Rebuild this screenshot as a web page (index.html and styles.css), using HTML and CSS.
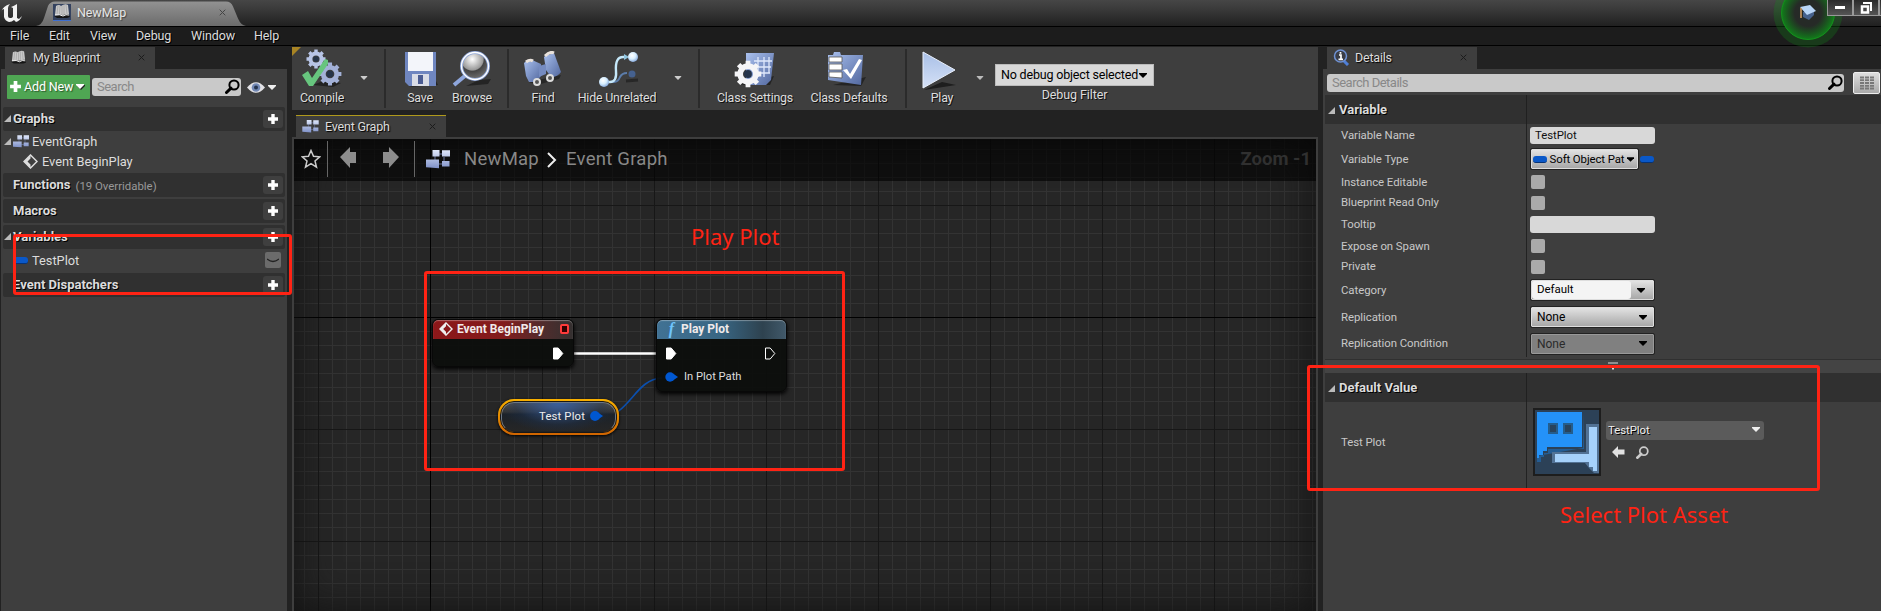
FILE: index.html
```html
<!DOCTYPE html>
<html lang="en">
<head>
<meta charset="utf-8">
<title>NewMap</title>
<link rel="stylesheet" href="styles.css">
</head>
<body>
<svg class="defs" width="0" height="0" aria-hidden="true">
  <defs>
    <linearGradient id="steel" x1="0" y1="0" x2="0" y2="1"><stop offset="0" stop-color="#dfe7fa"/><stop offset="1" stop-color="#7f91c8"/></linearGradient>
    <linearGradient id="blue" x1="0" y1="0" x2="1" y2="1"><stop offset="0" stop-color="#a9c0ee"/><stop offset="1" stop-color="#52689f"/></linearGradient>
    <radialGradient id="lens" cx=".4" cy=".25" r=".8"><stop offset="0" stop-color="#fff"/><stop offset=".5" stop-color="#999"/><stop offset=".55" stop-color="#444"/><stop offset="1" stop-color="#777"/></radialGradient>
    <radialGradient id="ball" cx=".4" cy=".35" r=".7"><stop offset="0" stop-color="#fff"/><stop offset=".5" stop-color="#d8efff"/><stop offset="1" stop-color="#7ea2d8"/></radialGradient>
    <linearGradient id="play" x1="0" y1="0" x2="0" y2="1"><stop offset="0" stop-color="#a8bfe6"/><stop offset="1" stop-color="#d5e1f7"/></linearGradient>
    <symbol id="caret" viewBox="0 0 8 5"><path d="M0 0h8v1L4 5 0 1z"/></symbol>
    <symbol id="plus" viewBox="0 0 12 12"><path d="M4.3 1h3.4v3.3H11v3.4H7.7V11H4.3V7.7H1V4.3h3.3z" fill="#fff"/></symbol>
    <symbol id="glass" viewBox="0 0 15 15"><circle cx="9" cy="6" r="4.6" fill="none" stroke="currentColor" stroke-width="2"/><path d="M6 9.2 1.5 13.5" stroke="currentColor" stroke-width="3" stroke-linecap="round"/></symbol>
    <symbol id="graph" viewBox="0 0 24 19"><path d="M12 4h6M9 10V4M18 7v5M12 14h6" stroke="#66739c" fill="none"/><path d="M6.500 0h7v6.500h-7zM16 .3h8v6.200h-8zM0 9.500h13v8.700L0 17.200zM16 11h7.500v5.600H16z" fill="url(#steel)"/></symbol>
    <symbol id="book" viewBox="0 0 16 15"><path d="M0 12l3 2h10l3-1-2-4z" fill="#151515"/><path d="M2 2q3-2 5 0 4-3 7-1l1 9q-3 0-6 1-4-1-8 0z" fill="#c9c9c9"/><path d="M4 1.500 3 10M6 2 5.500 10M8 2v8.500M10 1v9M12 1l1 9" stroke="#999" stroke-width=".6"/><path d="M1 11q5-1 8 1 3-2 6-1" fill="none" stroke="#fff"/></symbol>
    <symbol id="event" viewBox="0 0 15 15"><path d="M7.500 1 14 7.500 7.500 14 1 7.500z" fill="none" stroke="currentColor" stroke-width="1.500"/><path d="M7.500 1 1 7.500 7.500 14v-3.500L4.500 7.500l3-3z" fill="currentColor"/></symbol>
    <symbol id="cog" viewBox="-10 -10 20 20"><circle r="5.600" fill="none" stroke="currentColor" stroke-width="4"/><g stroke="currentColor" stroke-width="3.400"><path d="M0-9.500V-6M0 9.500V6M-9.500 0H-6M9.500 0H6M-6.700-6.700l2.400 2.400M6.700 6.700 4.300 4.300M-6.700 6.700l2.400-2.400M6.700-6.700 4.300-4.300"/></g><circle r="2.800" fill="#26344a"/></symbol>
    <symbol id="cross" viewBox="0 0 7 7"><path d="M.7.700l5.600 5.600M6.300.7.700 6.300" stroke="currentColor"/></symbol>
    <symbol id="exec" viewBox="0 0 12 13"><path d="M1.500 1h4.700l4.600 5.500L6.200 12H1.500z" stroke="#fff" stroke-linejoin="round"/></symbol>
    <symbol id="back" viewBox="0 0 17 24"><path d="M0 10 10 0v5h6v11h-6v5z"/></symbol>
    <symbol id="expanded" viewBox="0 0 7 7"><path d="M7 0v7H0z" fill="#bbb"/></symbol>
  </defs>
</svg>

<header class="titlebar">
  <svg class="ue" width="24" height="20" viewBox="0 0 24 20"><path d="M1 9Q3 3 10 1 8 3 8 5v8q0 2 2 2 3 0 3-2V5l-2-1q3-1 6-3v14l2 1 3-3q-2 5-6 6l-2-2q-2 2-5 2-4-1-5-5V6Q2 6 1 9z" fill="#f2f2f2"/></svg>
  <div class="maptab">
    <svg class="maptab-shape" width="210" height="25" viewBox="0 0 210 25"><defs><linearGradient id="tg" x1="0" y1="0" x2="0" y2="1"><stop offset="0" stop-color="#929292"/><stop offset="1" stop-color="#6b6b6b"/></linearGradient></defs><path d="M0 25q6-1 8-8l4-12Q14 .500 19 .500H190q5 0 7 5l5 12q3 7 8 7.500z" fill="url(#tg)"/></svg>
    <span class="mapicon"><svg width="16" height="15"><use href="#book"/></svg></span>
    <span class="maptitle">NewMap</span>
    <svg class="x" width="7" height="7"><use href="#cross"/></svg>
  </div>
  <div class="tutorial">
    <svg width="72" height="48" viewBox="0 0 72 48"><defs><radialGradient id="gl"><stop offset=".5" stop-color="#0a8a12" stop-opacity="0"/><stop offset="1" stop-color="#0a9a16" stop-opacity=".75"/></radialGradient></defs><circle cx="36" cy="13" r="34.500" fill="#128a18" fill-opacity=".28"/><circle cx="36" cy="13" r="26.500" fill="#262a27"/><circle cx="36" cy="13" r="26.500" fill="url(#gl)" stroke="#14921c"/><path d="M31 12v5l6 3 5-5v-4z" fill="#46618c"/><path d="M28 7 38 5l6 6-9 4z" fill="#b8d5f7"/><path d="M29 8v10" stroke="#d9a066" stroke-width="1.500"/></svg>
  </div>
  <div class="winbtns">
    <span><svg width="12" height="6"><path d="M1 1h10v3H1z" fill="#fff"/></svg></span>
    <span><svg width="12" height="12" viewBox="0 0 12 12"><path d="M3 0h9v9h-2V2H3z" fill="#fff"/><path d="M2 4.500h6v6H2z" fill="none" stroke="#fff" stroke-width="2.500"/></svg></span>
    <span></span>
  </div>
</header>
<nav class="menu"><span class="m1">File</span><span class="m2">Edit</span><span class="m3">View</span><span class="m4">Debug</span><span class="m5">Window</span><span class="m6">Help</span></nav>

<div class="dock">
  <aside class="left">
    <div class="tab"><svg width="15" height="15"><use href="#book"/></svg><span class="tabname">My Blueprint</span><svg class="x" width="7" height="7"><use href="#cross"/></svg></div>
    <div class="leftbody">
      <div class="tools">
        <button class="addnew"><svg width="13" height="13"><use href="#plus"/></svg><span>Add New</span><svg width="8" height="5" fill="#fff"><use href="#caret"/></svg></button>
        <div class="search"><span>Search</span><svg width="15" height="15"><use href="#glass"/></svg></div>
        <svg class="eye" width="18" height="11" viewBox="0 0 18 11"><path d="M0 5.500Q9-5 18 5.500 9 16 0 5.500z" fill="#e2e2e6"/><circle cx="9" cy="5.500" r="4.300" fill="#7288b4"/><circle cx="9" cy="5.500" r="2" fill="#25344e"/></svg>
        <svg width="8" height="5" fill="#eee"><use href="#caret"/></svg>
      </div>
      <div class="sec"><svg class="tri" width="7" height="7"><use href="#expanded"/></svg><b>Graphs</b><i><svg width="12" height="12"><use href="#plus"/></svg></i></div>
      <div class="item"><svg class="tri" width="7" height="7"><use href="#expanded"/></svg><svg width="16" height="13"><use href="#graph"/></svg><span>EventGraph</span></div>
      <div class="item deep"><svg width="15" height="15" color="#ddd"><use href="#event"/></svg><span>Event BeginPlay</span></div>
      <div class="sec"><b>Functions</b><small>(19 Overridable)</small><i><svg width="12" height="12"><use href="#plus"/></svg></i></div>
      <div class="sec gap"><b>Macros</b><i><svg width="12" height="12"><use href="#plus"/></svg></i></div>
      <div class="sec gap"><svg class="tri" width="7" height="7"><use href="#expanded"/></svg><b>Variables</b><i><svg width="12" height="12"><use href="#plus"/></svg></i></div>
      <div class="item var"><span class="pill"></span><span>TestPlot</span><i class="closed"><svg width="12" height="5" viewBox="0 0 12 5"><path d="M0 1q6 5 12 0" fill="none" stroke="#222" stroke-width="1.300"/></svg></i></div>
      <div class="sec"><b>Event Dispatchers</b><i><svg width="12" height="12"><use href="#plus"/></svg></i></div>
    </div>
  </aside>

  <main class="center">
    <div class="toolbar">
      <span class="corner"></span>
      <div class="tool compile"><svg width="42" height="40" viewBox="0 0 42 40"><path d="M12 36l10-4 18 2-8 4z" fill="#222"/><svg x="5" y="0" width="20" height="20" color="#b7c4e6"><use href="#cog"/></svg><svg x="17" y="13" width="24" height="24" color="#a3b1d8"><use href="#cog"/></svg><path d="M1 26l6-4 4 7L24 10l3 1v4L12 37H8z" fill="#67c57e"/></svg><span>Compile</span></div>
      <svg class="drop d1" width="8" height="4" fill="#ccc"><use href="#caret"/></svg>
      <div class="tool save"><svg width="36" height="38" viewBox="0 0 36 38"><path d="M5 36l29-2-3-6z" fill="#242424"/><path d="M1 1h31v34H5l-4-4z" fill="#6f86c0"/><path d="M4 1h25v19H4z" fill="#f3f5fa"/><path d="M8 23h17v12H8z" fill="#d9dce6"/><path d="M14 24h5v9h-5z" fill="#4b5c92"/></svg><span>Save</span></div>
      <div class="tool browse"><svg width="40" height="38" viewBox="0 0 40 38"><path d="M14 35l22-2 3-5-12 1z" fill="#242424"/><path d="M14 24 2 34" stroke="#8ea6dc" stroke-width="4"/><circle cx="23" cy="15" r="13.500" fill="url(#lens)" stroke="#90a8dc" stroke-width="3"/><circle cx="23" cy="15" r="13.500" fill="none" stroke="#fff" stroke-width="1.300"/></svg><span>Browse</span></div>
      <div class="tool find"><svg width="40" height="38" viewBox="0 0 40 38"><path d="M6 31l8 3 22-6 2-4z" fill="#272727"/><path d="M1 12q4-5 8-3l9 4v12l-5 6H6L3 25z" fill="url(#blue)"/><path d="M21 6q6-6 10-4l7 19q-3 5-10 5l-5-7z" fill="url(#blue)"/><path d="M3 11q4-3 7-1M22 5q5-5 9-3" stroke="#e9e2dc" stroke-width="3"/><path d="M16 15l7-2v10l-7 3z" fill="#758bc0"/><circle cx="14" cy="31" r="3" fill="#555" stroke="#ddd" stroke-width="2"/><circle cx="27" cy="27" r="3" fill="#555" stroke="#ddd" stroke-width="2"/></svg><span>Find</span></div>
      <div class="tool hide"><svg width="42" height="38" viewBox="0 0 42 38"><path d="M8 31h8q4 0 6-5 2-4 7-4" fill="none" stroke="#5c7daa" stroke-width="2"/><circle cx="34" cy="23" r="3.500" fill="#45618f"/><path d="M28 30l12-1" stroke="#272727" stroke-width="3"/><path d="M6 31h6q7 0 6-11-1-14 7-14h3" fill="none" stroke="#c5e8fa" stroke-width="2.400"/><path d="M26 3l5 3-5 3z" fill="#8fc4df"/><circle cx="6" cy="31" r="5" fill="url(#ball)"/><circle cx="35" cy="6" r="5" fill="url(#ball)"/></svg><span>Hide Unrelated</span></div>
      <svg class="drop d2" width="8" height="4" fill="#ccc"><use href="#caret"/></svg>
      <div class="tool settings"><svg width="42" height="38" viewBox="0 0 42 38"><path d="M6 34h30l4-9z" fill="#242424"/><path d="M12 2h28l-3 27-5 5H12z" fill="url(#blue)"/><path d="M24 6v20M30 6v20M35 6v16M20 10h18M20 16h17M20 22h16" stroke="#dfe9fc" stroke-width="1.300"/><svg x="0" y="9" width="28" height="28" color="#f5f5f7"><use href="#cog"/></svg></svg><span>Class Settings</span></div>
      <div class="tool defaults"><svg width="42" height="38" viewBox="0 0 42 38"><path d="M8 34l28 1 5-9z" fill="#242424"/><path d="M3 4h5l1-3h6l1 3h22l-2 30-33-5z" fill="url(#blue)"/><path d="M4 6h13v5H4zM4 13h13v6H4zM4 21h13v6L4 26z" fill="#fff" stroke="#555" stroke-width=".8"/><path d="M18 19l4-1 3 5L34 8l3 1-11 19z" fill="#fff"/></svg><span>Class Defaults</span></div>
      <div class="tool playb"><svg width="36" height="40" viewBox="0 0 36 40"><path d="M2 39l32-5-14-3z" fill="#1e1e1e"/><path d="M1 1 33 19 1 37z" fill="url(#play)" stroke="#e9f0fc"/></svg><span>Play</span></div>
      <svg class="drop d3" width="8" height="4" fill="#bbb"><use href="#caret"/></svg>
      <div class="filter"><div class="filterbox"><span>No debug object selected</span><svg width="8" height="5"><use href="#caret"/></svg></div><span>Debug Filter</span></div>
      <u class="s1"></u><u class="s2"></u><u class="s3"></u><u class="s4"></u>
    </div>
    <div class="tab graphtab"><svg width="17" height="13"><use href="#graph"/></svg><span class="tabname">Event Graph</span><svg class="x" width="7" height="7"><use href="#cross"/></svg></div>
    <section class="canvas">
      <div class="crumbs">
        <svg class="star" width="20" height="20" viewBox="0 0 20 20"><path d="M10 1.500l2.500 5.800 6.200.5-4.700 4.100 1.500 6.200-5.500-3.400-5.500 3.400L6 11.900 1.300 7.800l6.200-.5z" fill="none" stroke="#ccc" stroke-width="1.500"/></svg>
        <hr>
        <svg class="bk" width="17" height="24" fill="#8c8c8c"><use href="#back"/></svg>
        <svg class="fw" width="17" height="24" fill="#8c8c8c"><use href="#back"/></svg>
        <hr>
        <svg class="gi" width="24" height="19"><use href="#graph"/></svg>
        <span class="c1">NewMap</span>
        <svg class="chev" width="10" height="16" viewBox="0 0 10 16"><path d="M1 1l7 7-7 7" fill="none" stroke="#eee" stroke-width="2"/></svg>
        <span class="c2">Event Graph</span>
        <b class="zoom">Zoom -1</b>
      </div>
      <svg class="wires" width="1022" height="472" viewBox="294 139 1022 472"><path d="M574 353.500H656" stroke="#fff" stroke-width="2.600"/><path d="M600 417c30 0 34-38 62-39" fill="none" stroke="#0b4fae" stroke-width="1.600"/></svg>
      <div class="node ev"><div class="head"><svg width="14" height="14" color="#eee"><use href="#event"/></svg><b>Event BeginPlay</b><em></em></div><svg class="pin" width="12" height="13" fill="#fff"><use href="#exec"/></svg></div>
      <div class="node pp"><div class="head"><span class="fn">f</span><b>Play Plot</b></div>
        <div class="prow"><svg width="12" height="13" fill="#fff"><use href="#exec"/></svg><svg width="12" height="13" fill="none"><use href="#exec"/></svg></div>
        <div class="prow"><svg width="13" height="10" viewBox="0 0 13 10"><circle cx="5" cy="5" r="4.700" fill="#0057d0"/><path d="M8 1.500 13 5 8 8.500z" fill="#0057d0"/></svg><span>In Plot Path</span></div></div>
      <div class="getter"><div><span>Test Plot</span><svg width="13" height="10" viewBox="0 0 13 10"><circle cx="5" cy="5" r="4.900" fill="#0057d0"/><path d="M8 1.500 13 5 8 8.500z" fill="#0057d0"/></svg></div></div>
    </section>
  </main>

  <aside class="details">
    <div class="tab"><svg width="17" height="17" viewBox="0 0 17 17"><path d="M10 11l5 5" stroke="#4f7fd8" stroke-width="3"/><circle cx="7.500" cy="7" r="6" fill="#3a3d46" stroke="#6f92d4" stroke-width="1.500"/><path d="M7.500 3v1.800M6 6h2v4M5.500 10.300h4.500" stroke="#fff" stroke-width="1.700" fill="none"/></svg><span class="tabname">Details</span><svg class="x" width="7" height="7"><use href="#cross"/></svg></div>
    <div class="dbody">
      <div class="dsearch"><div class="search"><span>Search Details</span><svg width="15" height="15"><use href="#glass"/></svg></div><span class="gridbtn"><svg width="14" height="14" viewBox="0 0 14 14"><path d="M0 1.500h14M0 4.200h14M0 7h14M0 9.800h14M0 12.500h14" stroke="#777" stroke-width="1.800" stroke-dasharray="4 1"/></svg></span></div>
      <div class="dhead"><svg width="7" height="7"><use href="#expanded"/></svg><b>Variable</b></div>
      <div class="row h23"><label>Variable Name</label><div><span class="input">TestPlot</span></div></div>
      <div class="row h25"><label>Variable Type</label><div><span class="btn type"><span class="pill"></span><span>Soft Object Pat</span><svg width="7" height="5"><use href="#caret"/></svg></span><span class="pill"></span></div></div>
      <div class="row h21"><label>Instance Editable</label><div><span class="check"></span></div></div>
      <div class="row h20"><label>Blueprint Read Only</label><div><span class="check"></span></div></div>
      <div class="row h23"><label>Tooltip</label><div><span class="input"></span></div></div>
      <div class="row h21"><label>Expose on Spawn</label><div><span class="check"></span></div></div>
      <div class="row h20"><label>Private</label><div><span class="check"></span></div></div>
      <div class="row h27"><label>Category</label><div><span class="btn cat"><span>Default</span><svg width="8" height="5"><use href="#caret"/></svg></span></div></div>
      <div class="row h27"><label>Replication</label><div><span class="btn"><span>None</span><svg width="8" height="5"><use href="#caret"/></svg></span></div></div>
      <div class="row h26"><label>Replication Condition</label><div><span class="btn off"><span>None</span><svg width="8" height="5"><use href="#caret"/></svg></span></div></div>
      <div class="more"><svg width="10" height="8"><path d="M0 1h10M0 3.500h10" stroke="#ddd"/><path d="M4 6h2v1.500H4z" fill="#ddd"/></svg></div>
      <div class="dhead"><svg width="7" height="7"><use href="#expanded"/></svg><b>Default Value</b></div>
      <div class="row asset"><label>Test Plot</label><div>
        <svg class="thumb" width="64" height="64" viewBox="0 0 64 64"><path d="M0 0h64v64H0z" fill="#2c4157"/><path d="M49 2v37H13v4h-4v4H6v5H2V46L48 38z" fill="#245d94"/><path d="M2 2h45v35H12v4H8v4H4v3H2z" fill="#2492f8"/><path d="M13 13h10v11H13zM28 13h10v11H28z" fill="#245d8c"/><path d="M15 15h6v7h-6zM30 15h6v7h-6z" fill="#28435c"/><path d="M51 14h13v49h-5l-5-5-4-5H17V42h34z" fill="#527295"/><path d="M54 17h8v44h-4v-4h-4v-5H20v-8h34z" fill="#a5d1fb"/></svg>
        <div class="pick"><span class="asset-combo"><span>TestPlot</span><svg width="8" height="5" fill="#eee"><use href="#caret"/></svg></span><span class="acts"><svg width="13" height="12" viewBox="0 0 13 12"><path d="M0 6l6-6v3.500h6.500v5H6V12z" fill="#e2e2e2"/></svg><svg width="13" height="13" color="#ccc"><use href="#glass"/></svg></span></div></div></div>
    </div>
  </aside>
</div>

<div class="mark k1"></div><div class="mark k2"></div><div class="mark k3"></div>
<div class="note n1">Play Plot</div><div class="note n2">Select Plot Asset</div>
</body>
</html>
```
FILE: styles.css
```css
* { box-sizing: border-box; }
html { height: 611px; overflow: hidden; }
body { margin: 0; width: 1881px; height: 611px; overflow: hidden; position: relative; display: flex; flex-direction: column; background: #222; color: #dcdcdc; font-family: Roboto, "Liberation Sans", sans-serif; font-size: 13px; white-space: nowrap; }
svg { display: block; flex: none; }
.defs { position: absolute; }
i, em { font-style: normal; }

.titlebar { height: 27px; flex: none; display: flex; align-items: flex-start; position: relative; background: linear-gradient(#464646, #3a3a3a 35%, #202020); border-bottom: 1px solid #000; }
.ue { margin: 3px 0 0 0; }
.maptab { position: relative; width: 210px; height: 25px; margin: 1px 0 0 12px; display: flex; align-items: center; padding: 0 0 2px 29px; }
.maptab { width: 210px; margin-left: 12px; }
.maptab-shape { position: absolute; left: 0; top: 0; }
.maptab > *:not(.maptab-shape) { position: relative; }
.mapicon { width: 18px; height: 17px; margin-left: -12px; background: #34425f; border-bottom: 1px solid #3f6fd0; padding: 0 1px; }
.maptitle { margin-left: 6px; font-size: 12.5px; color: #e6e6e6; text-shadow: 1px 1px 1px #444; letter-spacing: -.1px; }
.x { margin-left: auto; color: #1c1c1c; }
.maptab .x { margin-right: 20px; color: #444; }
.tutorial { position: absolute; left: 1772px; top: 0; z-index: 2; }
.winbtns { position: absolute; right: 0; top: 0; z-index: 3; display: flex; width: 54px; overflow: hidden; }
.winbtns span { width: 26px; height: 16px; flex: none; border: 1px solid #999; border-top: 0; background: linear-gradient(#2a2a2a, #555); display: flex; align-items: center; justify-content: center; }
.menu { height: 19px; flex: none; border-bottom: 1px solid #000; background: #1c1c1c; display: flex; line-height: 17px; font-size: 12.5px; padding-left: 10px; text-shadow: 1px 1px 0 #000; letter-spacing: -.1px; }
.m1 { width: 39px; } .m2 { width: 41px; } .m3 { width: 46px; } .m4 { width: 55px; } .m5 { width: 63px; }

.dock { flex: 1; display: flex; padding-top: 1px; min-height: 0; }
.tab { width: 150px; height: 22px; background: #3e3e3e; display: flex; align-items: center; padding: 0 10px 1px 6px; gap: 6px; flex: none; text-shadow: 1px 1px 1px #000; }
.tabname { font-size: 12.5px; letter-spacing: -.2px; }
.left { width: 286px; margin-left: 1px; display: flex; flex-direction: column; }
.left .tab { margin-left: 4px; gap: 7px; }
.leftbody { flex: 1; background: #3e3e3e; padding: 6px 2px 0; }
.tools { height: 24px; display: flex; align-items: center; padding-left: 4px; margin-bottom: 8px; }
.addnew { width: 83px; height: 24px; border: 0; border-radius: 1px; background: #4fa653; color: #fff; font: 12.5px Roboto; display: flex; align-items: center; padding: 0 6px 1px 2px; gap: 2px; text-shadow: 1px 1px 1px #2b5a2d; }
.addnew svg:last-child { margin-left: auto; filter: drop-shadow(1px 1px 0 #222); }
.addnew span { letter-spacing: -.15px; }
.search { width: 149px; height: 18px; margin-left: 2px; background: #c9c9c9; border-radius: 3px; color: #888; display: flex; align-items: center; justify-content: space-between; padding: 0 1px 1px 5px; font-size: 13px; letter-spacing: -.5px; }
.search svg { color: #000; }
.eye { margin: 0 3px 0 6px; }
.sec { height: 24px; background: #303030; border-radius: 2px; display: flex; align-items: center; padding: 0 2px 1px 10px; text-shadow: 1px 1px 0 #000; }
.sec b { font-size: 13px; font-weight: 700; letter-spacing: 0; }
.sec small { font-size: 11.4px; color: #999; margin: 2px 0 0 5px; text-shadow: none; }
.sec i { width: 20px; height: 18px; background: #3f3f3f; border-radius: 3px; margin-left: auto; display: flex; align-items: center; justify-content: center; }
.gap { margin-top: 2px; }
.tri { margin-left: -9px; margin-right: 2px; }
.item { height: 21px; display: flex; align-items: center; padding-left: 10px; padding-bottom: 1px; gap: 3px; font-size: 12.8px; }
.item .tri { margin-right: -1px; }
.deep { padding-left: 20px; padding-bottom: 2px; gap: 4px; }
.var { height: 24px; padding-bottom: 2px; }
.pill { flex: none; width: 14px; height: 7px; border-radius: 3px; background: #0a58c8; border-bottom: 1px solid #063274; }
.var .pill { margin-left: 1px; margin-right: 1px; }
.closed { width: 16px; height: 16px; margin: 0 4px 0 auto; background: #6b6b6b; border-radius: 2px; display: flex; align-items: center; justify-content: center; }

.center { width: 1026px; margin-left: 5px; display: flex; flex-direction: column; }
.toolbar { height: 63px; flex: none; background: #3e3e3e; position: relative; display: flex; margin-bottom: 5px; text-shadow: 1px 1px 0 #111; }
.corner { position: absolute; left: 0; top: 0; border-top: 9px solid #a88424; border-right: 9px solid transparent; }
.tool { display: flex; flex-direction: column; align-items: center; justify-content: flex-end; height: 58px; font-size: 12.4px; letter-spacing: -.2px; width: 60px; flex: none; }
.tool span { line-height: 15px; margin-top: 1px; }
.toolbar u { position: absolute; top: 2px; height: 59px; width: 2px; background: #2b2b2b; }
.s1 { left: 92px; } .s2 { left: 215px; } .s3 { left: 406px; } .s4 { left: 613px; }
.drop { margin-top: 29px; }
.compile { width: 60px; } .d1 { margin-left: 8px; margin-right: 22px; }
.save { width: 60px; } .save svg { margin-left: 3px; } .browse { width: 44px; }
.find { margin-left: 19px; width: 60px; } .hide { margin-left: -1px; width: 90px; }
.hide svg { margin-left: 4px; }
.d2 { margin-left: 12px; margin-right: 26px; }
.settings { width: 94px; } .defaults { width: 94px; } .defaults svg { margin-right: 6px; }
.playb { margin-left: 14px; width: 64px; }
.playb svg { margin: 0 5px -2px 0; }
.d3 { margin-left: 2px; }
.filter { margin: 17px 0 0 11px; width: 159px; display: flex; flex-direction: column; align-items: center; font-size: 12.5px; letter-spacing: -.1px; line-height: 18px; }
.filterbox { width: 159px; height: 22px; background: #d8d8d8; border: 1px solid #bbb; color: #000; text-shadow: none; display: flex; align-items: center; justify-content: space-between; padding: 0 6px 0 5px; letter-spacing: -.18px; }
.graphtab { margin-left: 4px; height: 22px; border-top: 1px solid #b09a1c; }
.canvas { flex: 1; position: relative; border: 2px solid #3e3e3e; border-bottom: 0; overflow: hidden; background-color: #262626; box-shadow: inset 0 0 40px #111;
  background-image: linear-gradient(#000, #000), linear-gradient(90deg, #000, #000), linear-gradient(90deg, #171717 1px, transparent 1px), linear-gradient(#171717 1px, transparent 1px), linear-gradient(90deg, #333 1px, transparent 1px), linear-gradient(#333 1px, transparent 1px);
  background-size: 100% 1px, 1px 100%, 112px 112px, 112px 112px, 14px 14px, 14px 14px;
  background-position: 0 178px, 136px 0, 24px 0, 0 66px, 10px 0, 0 10px;
  background-repeat: no-repeat, no-repeat, repeat, repeat, repeat, repeat; }
.crumbs { height: 42px; background: rgba(0,0,0,.6); display: flex; align-items: center; color: #888; font-size: 18.5px; letter-spacing: .25px; position: relative; z-index: 1; padding-bottom: 2px; }
.crumbs hr { width: 1px; height: 36px; margin: 0 0 0 6px; border: 0; background: #666; }
.star { margin-left: 7px; }
.bk { margin-left: 12px; } .fw { margin: 0 15px 0 25px; transform: scaleX(-1); }
.crumbs .gi { margin-left: 11px; }
.crumbs .fw + hr { margin-left: 0; }
.c1 { margin-left: 14px; } .chev { margin: 2px 9px 0 8px; }
.zoom { margin-left: auto; margin-right: 5px; color: #303030; font-size: 18.5px; letter-spacing: 0; }
.wires { position: absolute; left: 0; top: 0; }
.node { position: absolute; border-radius: 6px; background: rgba(12,14,12,.93); border: 1px solid #080808; box-shadow: 0 2px 4px #000; font-size: 11.2px; overflow: hidden; }
.head { height: 19px; display: flex; align-items: center; border-radius: 5px 5px 0 0; box-shadow: inset 0 1px 1px rgba(255,255,255,.35); padding: 0 4px 2px 6px; gap: 4px; color: #f0eaea; font-size: 12px; }
.ev { left: 138px; top: 180px; width: 142px; height: 48px; }
.ev .head { background: linear-gradient(90deg, #8c1719, #821b1c 50%, #4e2d2d 80%, #343030); }
.head em { width: 9px; height: 10px; border: 2px solid #ff3b3b; border-radius: 2px; background: #300; margin-left: auto; }
.pin { margin: 8px 0 0 119px; }
.pp { left: 362px; top: 180px; width: 131px; height: 73px; }
.pp .head { background: linear-gradient(90deg, #417294, #386582 50%, #2e424f 82%, #41596a); padding-left: 9px; }
.fn { font: italic bold 16px "Liberation Serif", serif; color: #6fc4fb; width: 11px; line-height: 16px; text-align: center; }
.prow { height: 23px; display: flex; align-items: center; padding: 0 10px 0 8px; gap: 6px; margin-top: 3px; color: #ddd; letter-spacing: 0; }
.prow + .prow { margin-top: 0; }
.prow svg + svg { margin-left: auto; }
.getter { position: absolute; left: 204px; top: 260px; width: 121px; height: 36px; border-radius: 16px; padding: 3px; background: linear-gradient(#f8b000, #d06400); box-shadow: 0 1px 3px #000; }
.getter div { height: 100%; border-radius: 13px; border: 1px solid #6b7787; border-bottom-color: #222; background: radial-gradient(ellipse at 50% 0, #3a5f9d, rgba(30,50,80,.4) 55%, transparent 75%), linear-gradient(#555 0, #333 32%, #1c2229 40%, #262626); outline: 1px solid #181818; display: flex; align-items: center; justify-content: flex-end; padding: 0 12px 2px 0; gap: 5px; font-size: 11.3px; letter-spacing: .15px; color: #eee; }

.details { width: 558px; margin-left: 5px; display: flex; flex-direction: column; }
.details .tab { margin-left: 4px; gap: 5px; }
.dbody { flex: 1; background: #3e3e3e; padding: 3px 0 0 2px; display: flex; flex-direction: column; }
.dsearch { display: flex; align-items: center; height: 22px; margin-bottom: 1px; padding-left: 2px; flex: none; }
.dsearch .search { width: 517px; margin: 0; }
.gridbtn { width: 27px; height: 22px; margin-left: 9px; background: linear-gradient(#ddd, #aaa); border: 1px solid #eee; border-radius: 2px; display: flex; align-items: center; justify-content: center; }
.dhead { height: 29px; flex: none; background: linear-gradient(90deg, transparent 201px, #202020 201px, #202020 202px, transparent 202px), #303030; display: flex; align-items: center; padding: 0 0 1px 3px; gap: 4px; text-shadow: 1px 1px 0 #000; }
.dhead b { font-size: 13px; letter-spacing: 0; }
.dhead svg { margin-top: 2px; }
.row { display: flex; flex: none; font-size: 11.4px; color: #c8c8c8; letter-spacing: -.05px; }
.row label { width: 202px; padding-left: 16px; border-right: 1px solid #222; display: flex; align-items: center; padding-bottom: 2px; }
.row > div { display: flex; align-items: center; padding-left: 4px; padding-bottom: 1px; gap: 2px; }
.h20 { height: 20px; } .h21 { height: 21px; } .h23 { height: 23px; } .h25 { height: 25px; } .h26 { height: 26px; } .h27 { height: 27px; }
.input { width: 125px; height: 17px; margin-left: -1px; background: #d8d8d8; border-radius: 3px; color: #111; padding-left: 5px; line-height: 16px; }
.check { width: 14px; height: 14px; border-radius: 2px; background: #aaa; }
.btn { width: 123px; height: 20px; border: 1px solid #ddd; border-radius: 1px; outline: 1px solid #222; background: linear-gradient(#e2e2e2, #a8a8a8); color: #000; display: flex; align-items: center; justify-content: space-between; padding: 0 6px 0 5px; font-size: 12px; }
.type { width: 107px; padding: 0 3px 0 1px; gap: 1px; font-size: 11.4px; letter-spacing: -.1px; }
.cat { padding-left: 0; padding-right: 8px; font-size: 11.5px; }
.cat span { width: 99px; height: 100%; background: #f4f4f4; border-radius: 3px; line-height: 17px; padding-left: 5px; }
.off { background: #808080; border-color: #999; color: #2a2a2a; }
.more { height: 14px; margin: 2px 0 0; border-top: 1px solid #303030; background: #444; padding: 2px 0 0 283px; flex: none; }
.asset { height: 89px; }
.asset label { padding-bottom: 10px; }
.row.asset > div { align-items: flex-start; padding: 6px 0 0 6px; gap: 5px; }
.thumb { border: 2px solid #1d1d1d; box-sizing: content-box; }
.pick { display: flex; flex-direction: column; padding-top: 13px; }
.asset-combo { width: 158px; height: 19px; border-radius: 3px; background: #5b5b5b; display: flex; align-items: center; justify-content: space-between; padding: 0 4px 2px 2px; color: #eee; text-shadow: 1px 1px 0 #000; }
.acts { display: flex; gap: 11px; margin: 6px 0 0 6px; }

.mark { position: absolute; border: 3px solid #ff2314; border-radius: 3px; z-index: 5; }
.k1 { left: 13px; top: 234px; width: 279px; height: 61px; }
.k2 { left: 424px; top: 271px; width: 421px; height: 200px; }
.k3 { left: 1307px; top: 365px; width: 513px; height: 126px; }
.note { position: absolute; z-index: 5; color: #ff2314; font: 22px/30px "Noto Sans", "Open Sans", sans-serif; }
.n1 { left: 691px; top: 221px; }
.n2 { left: 1560px; top: 499px; }
```
